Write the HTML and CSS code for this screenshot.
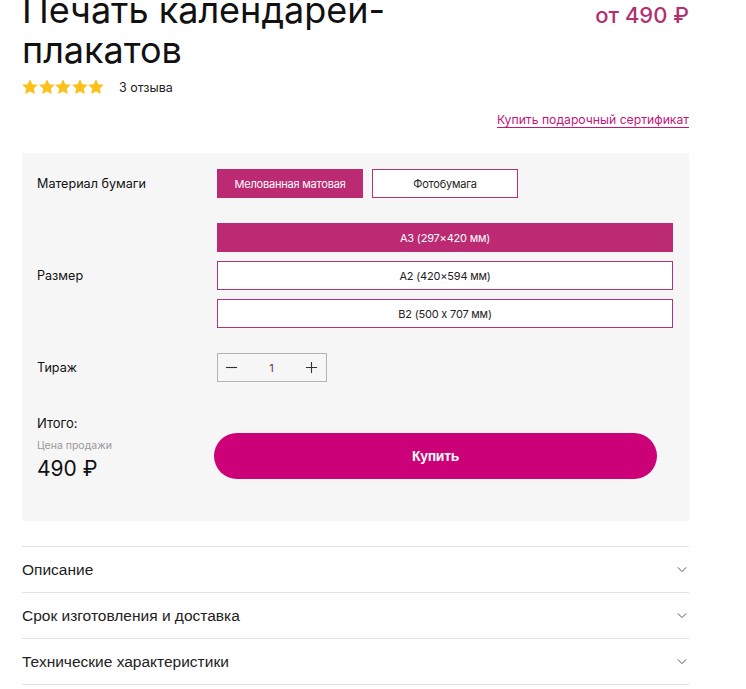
FILE: index.html
```html
<!DOCTYPE html>
<html lang="ru">
<head>
<meta charset="utf-8">
<title>Печать календарей-плакатов</title>
<link rel="stylesheet" href="styles.css">
</head>
<body>
<div class="page">
  <div class="head">
    <div class="head-left">
      <h1 class="title">Печать календарей-<br>плакатов</h1>
      <div class="rating">
        <div class="stars">
          <svg class="star" viewBox="1.6 1.6 20.8 20.8"><path d="M12 1.8l3.1 6.5 7.1.9-5.2 4.9 1.3 7.1L12 17.8l-6.3 3.4 1.3-7.1L1.8 9.2l7.1-.9z"/></svg>
          <svg class="star" viewBox="1.6 1.6 20.8 20.8"><path d="M12 1.8l3.1 6.5 7.1.9-5.2 4.9 1.3 7.1L12 17.8l-6.3 3.4 1.3-7.1L1.8 9.2l7.1-.9z"/></svg>
          <svg class="star" viewBox="1.6 1.6 20.8 20.8"><path d="M12 1.8l3.1 6.5 7.1.9-5.2 4.9 1.3 7.1L12 17.8l-6.3 3.4 1.3-7.1L1.8 9.2l7.1-.9z"/></svg>
          <svg class="star" viewBox="1.6 1.6 20.8 20.8"><path d="M12 1.8l3.1 6.5 7.1.9-5.2 4.9 1.3 7.1L12 17.8l-6.3 3.4 1.3-7.1L1.8 9.2l7.1-.9z"/></svg>
          <svg class="star" viewBox="1.6 1.6 20.8 20.8"><path d="M12 1.8l3.1 6.5 7.1.9-5.2 4.9 1.3 7.1L12 17.8l-6.3 3.4 1.3-7.1L1.8 9.2l7.1-.9z"/></svg>
        </div>
        <span class="reviews">3 отзыва</span>
      </div>
    </div>
    <div class="price">от 490 ₽</div>
  </div>

  <div class="cert-row"><a class="cert" href="#">Купить подарочный сертификат</a></div>

  <div class="panel">
    <div class="label">Материал бумаги</div>
    <div class="options">
      <button class="opt opt-active">Мелованная матовая</button>
      <button class="opt">Фотобумага</button>
    </div>

    <div class="label">Размер</div>
    <div class="sizes">
      <button class="size opt-active">A3 (297×420 мм)</button>
      <button class="size">A2 (420×594 мм)</button>
      <button class="size">B2 (500 х 707 мм)</button>
    </div>

    <div class="label">Тираж</div>
    <div class="counter">
      <span class="cnt-btn"><svg viewBox="0 0 14 14"><path d="M1 7h12"/></svg></span>
      <span class="cnt-val">1</span>
      <span class="cnt-btn"><svg viewBox="0 0 14 14"><path d="M1 7h12M7 1v12"/></svg></span>
    </div>

    <div class="total">
      <div class="total-title">Итого:</div>
      <div class="total-sub">Цена продажи</div>
      <div class="total-price">490 ₽</div>
    </div>
    <div class="buy-wrap"><button class="buy">Купить</button></div>
  </div>

  <div class="acc">
    <div class="acc-item"><span>Описание</span><svg class="chev" viewBox="0 0 12 8"><path d="M1 1.5l5 5 5-5"/></svg></div>
    <div class="acc-item"><span>Срок изготовления и доставка</span><svg class="chev" viewBox="0 0 12 8"><path d="M1 1.5l5 5 5-5"/></svg></div>
    <div class="acc-item"><span>Технические характеристики</span><svg class="chev" viewBox="0 0 12 8"><path d="M1 1.5l5 5 5-5"/></svg></div>
  </div>
</div>
</body>
</html>
```

FILE: styles.css
```css
* { box-sizing: border-box; }
html, body { margin: 0; padding: 0; background: #fff; }
body {
  font-family: Inter, "Noto Sans", sans-serif;
  color: #111;
  overflow: hidden;
}
.page {
  width: 667px;
  margin-left: 22px;
}
.head {
  display: flex;
  justify-content: space-between;
  align-items: flex-start;
  margin-top: -10px;
}
.title {
  margin: 0;
  font-size: 36px;
  line-height: 40px;
  font-weight: 400;
  color: #111;
}
.rating {
  display: flex;
  align-items: center;
  margin-top: 9px;
  height: 16px;
}
.stars { display: flex; gap: 0.5px; }
.star { width: 16px; height: 16px; fill: #fcc21b; }
.reviews {
  margin-left: 15px;
  font-size: 12.5px;
  color: #222;
}
.price {
  margin-top: 12px;
  font-size: 22px;
  font-weight: 500;
  color: #b22f70;
  line-height: 26px;
}
.cert-row {
  display: flex;
  justify-content: flex-end;
  margin-top: 17px;
}
.cert {
  font-size: 12.2px;
  color: #c0167b;
  text-decoration: underline;
  text-underline-offset: 3px;
  line-height: 16px;
}
.panel {
  margin-top: 25px;
  background: #f6f6f6;
  padding: 16px 16px 39px 15px;
  display: grid;
  grid-template-columns: 180px 1fr;
  row-gap: 25px;
}
.label {
  align-self: center;
  font-size: 12.6px;
  color: #111;
}
.options { display: flex; gap: 9px; }
button {
  font-family: inherit;
  cursor: pointer;
}
.opt {
  width: 146px;
  height: 29px;
  border: 1px solid #b0337a;
  background: #fff;
  color: #222;
  font-size: 11px;
  letter-spacing: -0.2px;
  padding: 0;
}
.opt-active {
  background: #bb2a72;
  border-color: #bb2a72;
  color: #fff;
}
.sizes { display: flex; flex-direction: column; gap: 9px; }
.size {
  height: 29px;
  border: 1px solid #b0337a;
  background: #fff;
  color: #222;
  font-size: 11px;
  letter-spacing: -0.2px;
  padding: 0;
}
.size.opt-active { background: #bb2a72; color: #fff; border-color: #bb2a72; }
.counter {
  width: 110px;
  height: 29px;
  border: 1px solid #b3b3b3;
  display: flex;
  align-items: center;
  justify-content: space-between;
  padding: 0 8px 0 7px;
}
.cnt-btn { display: flex; }
.cnt-btn svg { width: 13px; height: 13px; stroke: #333; stroke-width: 1.2; fill: none; }
.cnt-val { font-size: 11px; color: #444; }
.total {
  margin-top: 7px;
  display: flex;
  flex-direction: column;
}
.total-title { font-size: 13px; line-height: 18px; color: #111; }
.total-sub { font-size: 10.5px; color: #999; margin-top: 7px; line-height: 14px; }
.total-price { font-size: 21px; line-height: 26px; margin-top: 3px; color: #111; }
.buy-wrap { display: flex; align-items: flex-end; margin-left: -3px; }
.buy {
  width: 443px;
  height: 46px;
  border: none;
  border-radius: 23px;
  background: #cc0077;
  color: #fff;
  font-family: "Liberation Sans", Arial, sans-serif;
  font-weight: 700;
  font-size: 14px;
  letter-spacing: -0.3px;
  margin-bottom: 3px;
}
.acc {
  margin-top: 25px;
  border-top: 1px solid #e2e2e2;
}
.acc-item {
  height: 46px;
  border-bottom: 1px solid #e2e2e2;
  display: flex;
  align-items: center;
  justify-content: space-between;
  font-family: "Liberation Sans", Arial, sans-serif;
  font-size: 15.5px;
  color: #222;
}
.chev { width: 10px; height: 7px; margin-right: 2px; stroke: #555; stroke-width: 1.2; fill: none; }
```
